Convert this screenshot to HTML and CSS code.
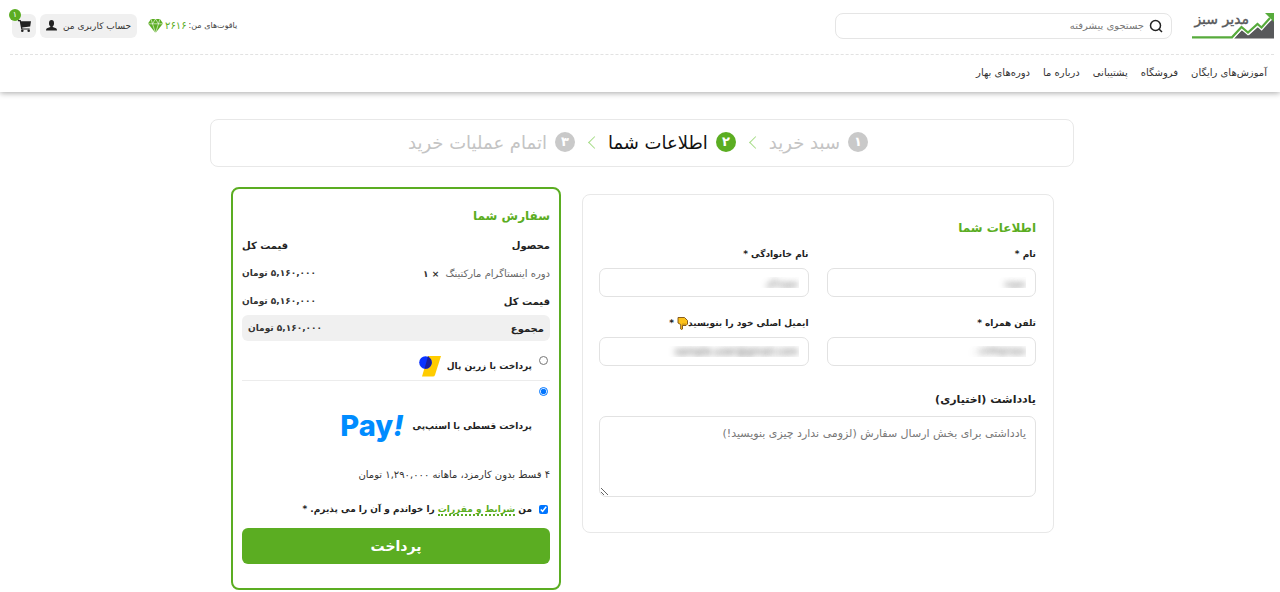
FILE: index.html
```html
<!DOCTYPE html>
<html lang="fa" dir="rtl">
<head>
    <meta charset="UTF-8">
    <meta name="viewport" content="width=device-width, initial-scale=1.0">
    <title>پرداخت - مدیر سبز</title>
    <link rel="stylesheet" href="styles.css">
</head>
<body>
    <header class="header">
        <div class="topbar">
            <a class="logo" href="#" aria-label="مدیر سبز">
                <svg width="82" height="28" viewBox="0 0 82 28">
                    <path d="M42 26.500 50 18l7 5 9-8 4 2 12-11v20.500z" fill="#58595b"/>
                    <path d="M40 25.500l9.500-10.500 6.500 5.500 9.500-8.500 4 3.500L78 6" fill="none" stroke="#fff" stroke-width="4.500"/>
                    <path d="M0 25.300h40l9.500-10.300 6.500 5.500 9.500-8.500 4 3.500L78 6" fill="none" stroke="#57ab3c" stroke-width="2.200"/>
                    <path d="M73 1h9v9z" fill="#57ab3c"/>
                    <text class="logo-text" x="57" y="12">مدیر سبز</text>
                </svg>
            </a>
            <label class="search">
                <svg width="14" height="14" viewBox="0 0 14 14" fill="none" stroke="#222" stroke-width="1.500">
                    <circle cx="6.500" cy="6.500" r="5"/>
                    <path d="M10 10l3 3"/>
                </svg>
                <input type="search" aria-label="جستجو" placeholder="جستجوی پیشرفته">
            </label>
            <div class="tools">
                <div class="gems">
                    <span class="gems-label">یاقوت‌های من:</span>
                    <span class="gems-count">۲۶۱۶</span>
                    <svg width="15" height="14" viewBox="0 0 15 14">
                        <path d="M3 0h9l3 4.500L7.500 14 0 4.500z" fill="#5bad22"/>
                        <path d="M0 4.800h15M3 0l1.500 4.800L7.500 14l3-9.200L12 0M4.500 4.800 7.500 0l3 4.800" fill="none" stroke="#fff" stroke-width=".6"/>
                    </svg>
                </div>
                <a class="tool account" href="#">
                    حساب کاربری من
                    <svg width="11" height="11" viewBox="0 0 11 11" fill="#222">
                        <ellipse cx="5.500" cy="3.200" rx="2.500" ry="3.200"/>
                        <path d="M4.300 5h2.400v2l3.300 1.200q1 .6 1 2.300H0q0-1.700 1-2.300L4.300 7z"/>
                    </svg>
                </a>
                <a class="tool cart" href="#" aria-label="سبد خرید">
                    <svg width="13" height="12" viewBox="0 0 13 12" fill="#222">
                        <path d="M0 0h2.700l.3 1.300h10l-.8 5.200-8 1 .2.900h7.300v1.200H3.300L1.700 1.200H0z"/>
                        <circle cx="4.300" cy="10.700" r="1.300"/>
                        <circle cx="10.700" cy="10.700" r="1.300"/>
                    </svg>
                    <span class="badge">۱</span>
                </a>
            </div>
        </div>
        <nav class="nav">
            <a href="#">آموزش‌های رایگان</a>
            <a href="#">فروشگاه</a>
            <a href="#">پشتیبانی</a>
            <a href="#">درباره ما</a>
            <a href="#">دوره‌های بهار</a>
        </nav>
    </header>

    <main class="main">
        <ol class="steps">
            <li class="step"><span class="step-number">۱</span>سبد خرید</li>
            <li class="step active"><span class="step-number">۲</span>اطلاعات شما</li>
            <li class="step"><span class="step-number">۳</span>اتمام عملیات خرید</li>
        </ol>

        <form class="checkout">
            <section class="info">
                <h2>اطلاعات شما</h2>
                <div class="fields">
                    <div class="field">
                        <label for="firstName">نام *</label>
                        <input class="masked" type="text" id="firstName" value="نمونه">
                    </div>
                    <div class="field">
                        <label for="lastName">نام خانوادگی *</label>
                        <input class="masked" type="text" id="lastName" value="نمونه‌ای">
                    </div>
                    <div class="field">
                        <label for="phone">تلفن همراه *</label>
                        <input class="masked" type="text" id="phone" value="۰۱۲۳۴۵۶۷۸۹">
                    </div>
                    <div class="field">
                        <label for="email">ایمیل اصلی خود را بنویسید<svg class="hand" width="11" height="13" viewBox="0 0 11 13">
                            <path d="M1 .5h6.500l3 3v3.500l-1.500 1.500H5.500v3.500q-.9 1-1.800 0V7.500L1 6z" fill="#fcc21b" stroke="#7a4f12" stroke-width=".9"/>
                            <path d="M6 6.500v2M8 6.500v2" stroke="#8a5a12" stroke-width=".7"/>
                        </svg> *</label>
                        <input class="masked" type="text" id="email" value="sample.user@gmail.com">
                    </div>
                </div>
                <div class="field note">
                    <label for="note">یادداشت (اختیاری)</label>
                    <textarea id="note" placeholder="یادداشتی برای بخش ارسال سفارش (لزومی ندارد چیزی بنویسید!)"></textarea>
                </div>
            </section>

            <section class="order">
                <h2>سفارش شما</h2>
                <table class="order-table">
                    <thead>
                        <tr><th>محصول</th><th>قیمت کل</th></tr>
                    </thead>
                    <tbody>
                        <tr>
                            <td class="product">دوره اینستاگرام مارکتینگ <strong>× ۱</strong></td>
                            <td class="price">۵,۱۶۰,۰۰۰ تومان</td>
                        </tr>
                        <tr><th>قیمت کل</th><td class="price">۵,۱۶۰,۰۰۰ تومان</td></tr>
                        <tr class="total"><th>مجموع</th><td class="price">۵,۱۶۰,۰۰۰ تومان</td></tr>
                    </tbody>
                </table>

                <ul class="methods">
                    <li class="method">
                        <input type="radio" name="method" id="zarinpal">
                        <label for="zarinpal">پرداخت با زرین پال
                            <svg width="22" height="21" viewBox="0 0 22 21">
                                <path d="M9 0h13l-6 19q-.5 1.500-2 1.500H3z" fill="#fc0"/>
                                <circle cx="6.500" cy="6.500" r="6.300" fill="#0a33ff"/>
                                <path d="M9 0l3.200 3.800q1.200 3.200-.4 6T6.700 12.800L5.500 12.700z" fill="#1a1f9c"/>
                            </svg>
                        </label>
                    </li>
                    <li class="method snapp">
                        <input type="radio" name="method" id="snapp" checked>
                        <label for="snapp">پرداخت قسطی با اسنپ‌پی
                            <span class="pay" dir="ltr">Pay<i>!</i></span>
                        </label>
                    </li>
                </ul>
                <p class="installments">۴ قسط بدون کارمزد، ماهانه ۱,۲۹۰,۰۰۰ تومان</p>
                <div class="terms">
                    <input type="checkbox" id="terms" checked>
                    <label for="terms">من <a href="#">شرایط و مقررات</a> را خواندم و آن را می پذیرم. *</label>
                </div>
                <button class="submit" type="submit">پرداخت</button>
            </section>
        </form>
    </main>
</body>
</html>
```
FILE: styles.css
```css
* {
    box-sizing: border-box;
}
body {
    margin: 0;
    background-color: #fff;
    color: #222;
    font-family: "DejaVu Sans", sans-serif;
    font-size: 10px;
}
a {
    color: inherit;
    text-decoration: none;
}
input, textarea, button {
    font-family: inherit;
}
svg {
    flex-shrink: 0;
}

/* header */
.header {
    padding: 0 6px 2px 10px;
    box-shadow: 0 1px 6px rgba(0, 0, 0, 0.35);
}
.topbar {
    display: flex;
    align-items: center;
    height: 55px;
    padding-bottom: 3px;
    border-bottom: 1px dashed #e2e2e2;
}
.logo {
    display: flex;
}
.logo-text {
    font-size: 14px;
    fill: #58595b;
    stroke: #58595b;
    stroke-width: 0.4px;
}
.search {
    display: flex;
    align-items: center;
    gap: 5px;
    width: 337px;
    height: 26px;
    margin-right: 20px;
    padding: 0 8px;
    border: 1px solid #e5e5e5;
    border-radius: 8px;
}
.search input {
    flex: 1;
    min-width: 0;
    padding: 0;
    border: 0;
    outline: 0;
    background: none;
    font-size: 10px;
}
.search input::placeholder {
    color: #777;
}
.tools {
    display: flex;
    align-items: center;
    gap: 4px;
    margin-right: auto;
    padding-left: 2px;
}
.gems {
    display: flex;
    align-items: center;
    gap: 2px;
    margin-left: 7px;
}
.gems-label {
    font-size: 8px;
    color: #444;
}
.gems-count {
    color: #5bad22;
}
.tool {
    display: flex;
    align-items: center;
    justify-content: center;
    gap: 6px;
    height: 24px;
    background-color: #f0f0f0;
    border-radius: 6px;
}
.account {
    padding: 0 6px;
    font-size: 9px;
    color: #333;
}
.cart {
    position: relative;
    width: 24px;
}
.badge {
    position: absolute;
    top: -5px;
    left: -3px;
    width: 12px;
    height: 12px;
    border-radius: 50%;
    background-color: #5bad22;
    color: #fff;
    font-size: 8px;
    line-height: 12px;
    text-align: center;
}
.nav {
    display: flex;
    gap: 13px;
    padding: 0 7px;
    color: #333;
    line-height: 35px;
}

/* steps */
.main {
    max-width: 868px;
    margin: 0 auto;
    padding: 27px 0 0 4px;
}
.steps {
    display: flex;
    align-items: center;
    justify-content: center;
    height: 48px;
    margin: 0;
    padding: 0 8px 2px 0;
    border: 1px solid #e8e8e8;
    border-radius: 8px;
    list-style: none;
}
.step {
    display: flex;
    align-items: center;
    gap: 8px;
    color: #c4c4c4;
    font-size: 18px;
}
.step + .step::before {
    content: "";
    width: 8px;
    height: 8px;
    margin: 0 9px 0 7px;
    border-left: 1px solid #a5dc86;
    border-bottom: 1px solid #a5dc86;
    transform: rotate(45deg);
}
.step-number {
    width: 20px;
    height: 20px;
    border-radius: 50%;
    background-color: #c9c9c9;
    color: #fff;
    font-size: 13px;
    font-weight: bold;
    line-height: 20px;
    text-align: center;
}
.step.active {
    color: #111;
}
.active .step-number {
    background-color: #5bad22;
}

/* checkout */
.checkout {
    display: grid;
    grid-template-columns: 1fr 330px;
    align-items: start;
    gap: 21px;
    padding: 20px 20px 0 21px;
}
h2 {
    margin: 0;
    color: #5bad22;
    font-size: 12px;
}
.info {
    margin-top: 7px;
    padding: 21px 17px 35px 16px;
    border: 1px solid #e8e8e8;
    border-radius: 8px;
}
.info h2 {
    line-height: 24px;
}
.fields {
    display: grid;
    grid-template-columns: 1fr 1fr;
    gap: 12px 18px;
}
.field label {
    display: block;
    height: 28px;
    font-size: 9px;
    font-weight: bold;
    line-height: 28px;
}
.field input, .field textarea {
    display: block;
    width: 100%;
    border: 1px solid #e2e2e2;
    border-radius: 7px;
    outline: 0;
}
.field input {
    height: 29px;
    padding: 0 9px;
    font-size: 10px;
}
.field .masked {
    color: transparent;
    text-shadow: 0 0 6px rgba(0, 0, 0, 0.7);
}
.hand {
    vertical-align: middle;
}
.note {
    margin-top: 18px;
}
.note label {
    height: 32px;
    font-size: 11px;
    line-height: 32px;
}
.field textarea {
    height: 81px;
    padding: 10px 9px;
    font-size: 11px;
}
.field textarea::placeholder {
    color: #777;
}

.order {
    padding: 12px 9px 24px;
    border: 2px solid #5bad22;
    border-radius: 8px;
}
.order h2 {
    line-height: 30px;
}
.order-table {
    width: 100%;
    border-collapse: separate;
    border-spacing: 0;
}
.order-table th, .order-table td {
    height: 28px;
    padding: 0;
    text-align: right;
}
.order-table th:last-child, .order-table td:last-child {
    text-align: left;
}
.order-table .product {
    color: #666;
}
.product strong {
    margin-right: 3px;
    color: #333;
    font-size: 9px;
}
.order-table .price {
    color: #333;
    font-size: 9px;
    font-weight: bold;
}
.order-table .total th, .order-table .total td {
    height: 26px;
    padding: 0 6px;
    background-color: #f0f0f0;
}
.total th {
    border-radius: 0 6px 6px 0;
}
.total td {
    border-radius: 6px 0 0 6px;
}
.methods {
    margin: 9px 0 0;
    padding: 0;
    list-style: none;
}
.method {
    display: flex;
    align-items: flex-start;
    gap: 5px;
}
.method + .method {
    border-top: 1px solid #ececec;
}
.method input, .terms input {
    flex-shrink: 0;
    width: 9px;
    height: 9px;
    margin: 6px 2px 0;
}
.method label {
    display: flex;
    align-items: center;
    gap: 6px;
    height: 30px;
    padding-top: 2px;
    font-size: 9px;
    font-weight: bold;
}
.method.snapp label {
    gap: 9px;
    height: 82px;
    padding-top: 8px;
}
.pay {
    color: #008cff;
    font-family: Inter, sans-serif;
    font-size: 29px;
    font-weight: 800;
    line-height: 32px;
}
.installments {
    margin: 0;
    color: #333;
    line-height: 24px;
}
.terms {
    display: flex;
    align-items: center;
    gap: 5px;
    height: 24px;
    margin: 10px 0 7px;
    font-size: 9px;
    font-weight: bold;
}
.terms input {
    margin-top: 0;
}
.terms a {
    color: #5bad22;
    border-bottom: 2px dotted #5bad22;
}
.submit {
    display: block;
    width: 100%;
    height: 36px;
    padding: 0;
    border: 0;
    border-radius: 6px;
    background-color: #5bad22;
    color: #fff;
    font-size: 14px;
    font-weight: bold;
    cursor: pointer;
}
```
